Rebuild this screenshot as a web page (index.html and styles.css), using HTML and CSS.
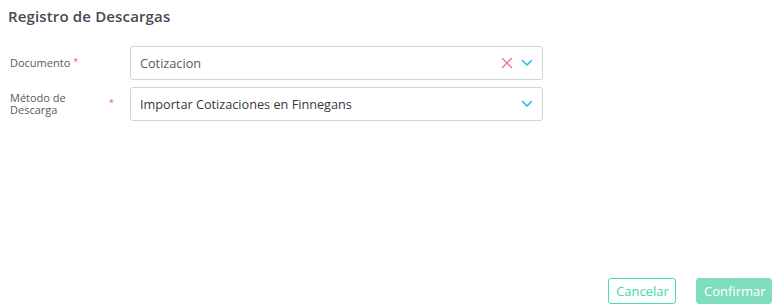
FILE: index.html
```html
<!DOCTYPE html>
<html lang="es">
<head>
<meta charset="utf-8">
<link rel="stylesheet" href="styles.css">
</head>
<body>
<div class="modal">
  <h1 class="title">Registro de Descargas</h1>
  <div class="form">
    <div class="row">
      <div class="label"><span class="text">Documento</span><span class="req">*</span></div>
      <div class="select">
        <span class="value light">Cotizacion</span>
        <span class="icons">
          <svg class="clear" width="12" height="12" viewBox="0 0 12 12"><path d="M1.5 1.5L10.5 10.5M10.5 1.5L1.5 10.5" stroke="#f3739b" stroke-width="1.4" fill="none" stroke-linecap="round"/></svg>
          <svg class="chev" width="12" height="8" viewBox="0 0 12 8"><path d="M1.5 1.5L6 6L10.5 1.5" stroke="#1ec3e6" stroke-width="1.6" fill="none" stroke-linecap="round" stroke-linejoin="round"/></svg>
        </span>
      </div>
    </div>
    <div class="row">
      <div class="label"><span class="text wrap">Método de Descarga</span><span class="req">*</span></div>
      <div class="select">
        <span class="value">Importar Cotizaciones en Finnegans</span>
        <span class="icons">
          <svg class="chev" width="12" height="8" viewBox="0 0 12 8"><path d="M1.5 1.5L6 6L10.5 1.5" stroke="#1ec3e6" stroke-width="1.6" fill="none" stroke-linecap="round" stroke-linejoin="round"/></svg>
        </span>
      </div>
    </div>
  </div>
  <div class="footer">
    <button class="btn outline">Cancelar</button>
    <button class="btn solid">Confirmar</button>
  </div>
</div>
</body>
</html>
```
FILE: styles.css
```css
html, body { margin: 0; padding: 0; background: #fff; }
body { font-family: "Open Sans", "DejaVu Sans", sans-serif; color: #495057; }
.modal { width: 777px; height: 308px; box-sizing: border-box; padding: 6px 5px 4px 8px; display: flex; flex-direction: column; }
.title { margin: 0; font-size: 15px; font-weight: 600; color: #454b52; line-height: 20px; letter-spacing: 0.15px; }
.form { margin-top: 20px; display: flex; flex-direction: column; gap: 7px; }
.row { display: flex; align-items: center; }
.label { width: 120px; padding-left: 2px; box-sizing: border-box; flex: none; display: flex; align-items: center; font-size: 11px; color: #555b61; line-height: 12px; }
.text.wrap { width: 96px; }
.req { color: #f0506e; font-size: 9px; margin-left: 3px; position: relative; top: -1px; }
.label + .select { margin-left: 2px; }
.select { width: 413px; height: 34px; box-sizing: border-box; border: 1px solid #ced4da; border-radius: 3px; display: flex; align-items: center; justify-content: space-between; padding: 0 9px 0 9px; }
.value { font-size: 12.7px; color: #343a40; }
.value.light { color: #555b61; }
.icons { display: flex; align-items: center; gap: 8px; }
.footer { margin-top: auto; display: flex; justify-content: flex-end; gap: 20px; }
.btn { font-family: inherit; font-size: 13px; height: 26px; border-radius: 3px; padding: 0 7px; box-sizing: border-box; }
.outline { background: #fff; border: 1px solid #3ee0b0; color: #3ed8ab; width: 68px; }
.solid { background: #7fdcbe; border: 1px solid #7fdcbe; color: #fff; width: 76px; }
```
